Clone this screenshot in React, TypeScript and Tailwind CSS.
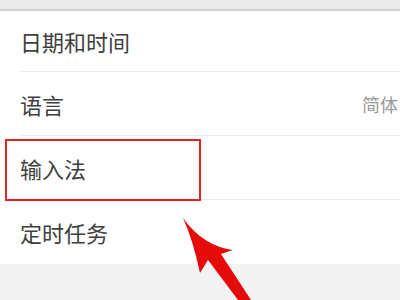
import React from "react";

type Row = {
  label: string;
  value?: string;
  height: string;
  divider: boolean;
};

const rows: Row[] = [
  { label: "日期和时间", height: "h-[61px]", divider: true },
  { label: "语言", value: "简体", height: "h-[64px]", divider: true },
  { label: "输入法", height: "h-[64px]", divider: true },
  { label: "定时任务", height: "h-[64px]", divider: false },
];

function SettingRow({ row }: { row: Row }) {
  return (
    <div className={`flex items-center ml-5 ${row.height} ${row.divider ? "border-b border-[#ececec]" : ""}`}>
      <span className="flex-1 text-[22px] leading-none text-[#404040]">{row.label}</span>
      {row.value && (
        <span className="w-[38px] shrink-0 whitespace-nowrap text-[18px] leading-none text-[#9a9a9a]">
          {row.value}
        </span>
      )}
    </div>
  );
}

function Arrow() {
  return (
    <svg className="absolute left-0 top-0" width="400" height="300" viewBox="0 0 400 300">
      <path
        d="M183 218 Q203 246 233 250 L221 254 L251 300 L238 300 L208 260 L200 273 Q193 240 183 218 Z"
        fill="#e50b0b"
      />
    </svg>
  );
}

export default function App() {
  return (
    <div
      className="relative w-[400px] h-[300px] overflow-hidden bg-[#f3f3f3] flex flex-col"
      style={{ fontFamily: '"Noto Sans CJK SC", "Noto Sans", sans-serif' }}
    >
      <div className="h-[11px] shrink-0 bg-[#ebebeb] border-b-2 border-[#d2d2d2]" />
      <div className="bg-white">
        {rows.map((row) => (
          <SettingRow key={row.label} row={row} />
        ))}
      </div>
      <div className="absolute left-[5px] top-[139px] w-[196px] h-[62px] border-2 border-[#e02424]" />
      <Arrow />
    </div>
  );
}
